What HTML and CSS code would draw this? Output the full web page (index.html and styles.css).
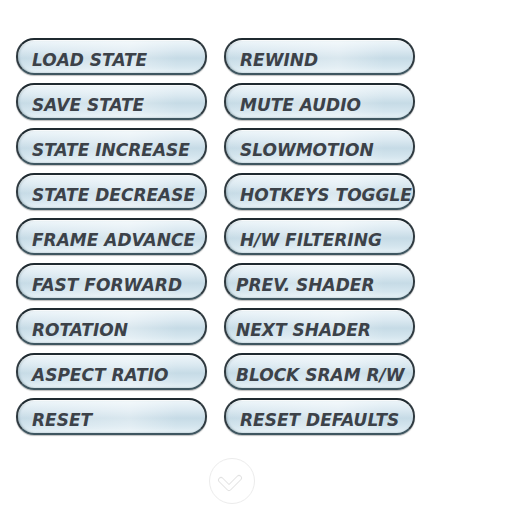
FILE: index.html
```html
<!DOCTYPE html>
<html>
<head>
<meta charset="utf-8">
<link rel="stylesheet" href="styles.css">
</head>
<body>
<div class="grid">
  <div class="btn"><span>LOAD STATE</span></div>
  <div class="btn"><span>REWIND</span></div>
  <div class="btn"><span>SAVE STATE</span></div>
  <div class="btn"><span>MUTE AUDIO</span></div>
  <div class="btn"><span>STATE INCREASE</span></div>
  <div class="btn"><span>SLOWMOTION</span></div>
  <div class="btn"><span>STATE DECREASE</span></div>
  <div class="btn"><span>HOTKEYS TOGGLE</span></div>
  <div class="btn"><span>FRAME ADVANCE</span></div>
  <div class="btn"><span>H/W FILTERING</span></div>
  <div class="btn"><span>FAST FORWARD</span></div>
  <div class="btn tight"><span>PREV. SHADER</span></div>
  <div class="btn"><span>ROTATION</span></div>
  <div class="btn tight"><span>NEXT SHADER</span></div>
  <div class="btn"><span>ASPECT RATIO</span></div>
  <div class="btn tight"><span>BLOCK SRAM R/W</span></div>
  <div class="btn"><span>RESET</span></div>
  <div class="btn"><span>RESET DEFAULTS</span></div>
</div>
<div class="footer">
  <div class="ok">
    <svg width="30" height="24" viewBox="0 0 30 24">
      <path d="M4 8 L12 16 L22 6" fill="none" stroke="#e2e2e2" stroke-width="6" stroke-linecap="round" stroke-linejoin="round"/>
      <path d="M4 8 L12 16 L22 6" fill="none" stroke="#ffffff" stroke-width="4" stroke-linecap="round" stroke-linejoin="round"/>
    </svg>
  </div>
</div>
</body>
</html>
```
FILE: styles.css
```css
html, body {
  margin: 0;
  padding: 0;
  background: #ffffff;
}
body {
  width: 512px;
  height: 512px;
  overflow: hidden;
  font-family: "DejaVu Sans", sans-serif;
}
.grid {
  display: grid;
  grid-template-columns: 191px 191px;
  column-gap: 17px;
  row-gap: 8px;
  padding: 38px 0 0 16px;
}
.btn {
  box-sizing: border-box;
  height: 37px;
  border-radius: 18px;
  border: 2px solid #2f3a40;
  border-top-color: #1f2a30;
  border-bottom-color: #3f5660;
  background:
    linear-gradient(90deg, rgba(255,255,255,0) 0%, rgba(255,255,255,0.35) 60%, rgba(255,255,255,0) 85%),
    linear-gradient(180deg, #eef6fa 0%, #dbe9f1 30%, #c6dbe6 55%, #d4e5ee 80%, #e6f1f6 100%);
  box-shadow: inset 0 1px 1px rgba(255,255,255,0.9), inset 1px 0 2px rgba(90,120,130,0.5), 0 1px 1px rgba(0,0,0,0.25);
  display: flex;
  align-items: center;
  padding-left: 14px;
  white-space: nowrap;
  overflow: visible;
}
.btn.tight {
  padding-left: 10px;
}
.btn span {
  font-weight: bold;
  font-style: italic;
  font-size: 17px;
  color: #3c4249;
  letter-spacing: 0;
  margin-top: 6px;
}
.footer {
  display: flex;
  justify-content: center;
  padding: 23px 0 0 0;
  margin-left: -48px;
}
.ok {
  width: 46px;
  height: 46px;
  border-radius: 50%;
  border: 1px solid #ececec;
  box-sizing: border-box;
  display: flex;
  align-items: center;
  justify-content: center;
  padding-top: 6px;
}
```
